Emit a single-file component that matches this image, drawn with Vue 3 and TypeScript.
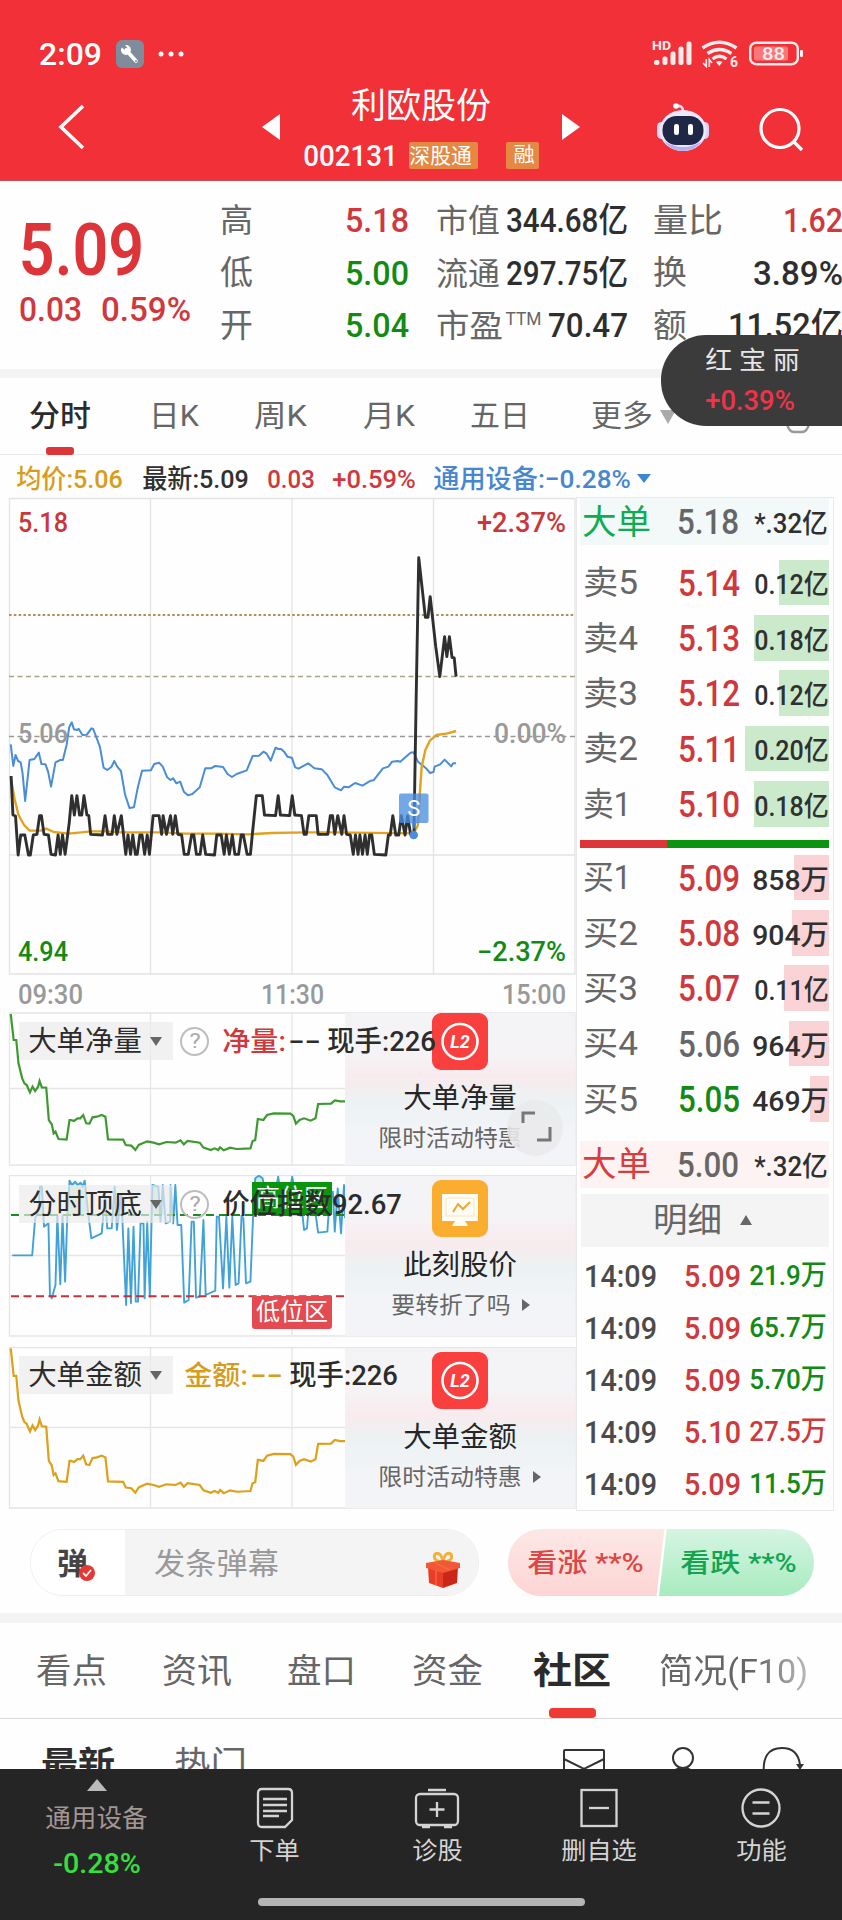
<script setup lang="ts">
import { h } from 'vue'

interface FitProps { t: string; w: number; s: number }

// Single line of text condensed or stretched to a fixed ink width.
const Fit = (p: FitProps) => {
  const bearing = p.s * 0.03
  return h('svg', { width: p.w, height: p.s, overflow: 'visible', style: { display: 'block', flex: 'none' } }, [
    h('text', {
      x: -bearing,
      y: p.s / 2 + p.s * 0.36,
      'font-size': p.s,
      fill: 'currentColor',
      textLength: p.w + bearing * 2,
      lengthAdjust: 'spacingAndGlyphs',
    }, p.t),
  ])
}
Fit.props = ['t', 'w', 's']

const quotes = [
  { a: '高', b: '5.18', bc: 'up', c: '市值', d: '344.68亿', dw: 120, e: '量比', ew: 68, f: '1.62', fw: 58, fc: 'up' },
  { a: '低', b: '5.00', bc: 'down', c: '流通', d: '297.75亿', dw: 120, e: '换', ew: 32, f: '3.89%', fw: 88, fc: '' },
  { a: '开', b: '5.04', bc: 'down', c: '市盈', d: '70.47', dw: 78, e: '额', ew: 32, f: '11.52亿', fw: 113, fc: '', ttm: true },
]

const periods = [
  { t: '分时', w: 60, gap: 30, on: true },
  { t: '日K', w: 48, gap: 60 },
  { t: '周K', w: 51, gap: 57 },
  { t: '月K', w: 50, gap: 58 },
  { t: '五日', w: 58, gap: 57 },
  { t: '更多', w: 60, gap: 63 },
]

const sells = [
  { n: '卖5', w: 53, p: '5.14', v: '0.12亿', bar: 50 },
  { n: '卖4', w: 53, p: '5.13', v: '0.18亿', bar: 75 },
  { n: '卖3', w: 53, p: '5.12', v: '0.12亿', bar: 50 },
  { n: '卖2', w: 53, p: '5.11', v: '0.20亿', bar: 84 },
  { n: '卖1', w: 46, p: '5.10', v: '0.18亿', bar: 75 },
]
const buys = [
  { n: '买1', w: 46, p: '5.09', c: 'up', v: '858万', bar: 35 },
  { n: '买2', w: 53, p: '5.08', c: 'up', v: '904万', bar: 37 },
  { n: '买3', w: 53, p: '5.07', c: 'up', v: '0.11亿', bar: 45 },
  { n: '买4', w: 53, p: '5.06', c: 'flat', v: '964万', bar: 40 },
  { n: '买5', w: 53, p: '5.05', c: 'down', v: '469万', bar: 19.5 },
]
const ticks = [
  { p: '5.09', v: '21.9万', c: 'down' },
  { p: '5.09', v: '65.7万', c: 'down' },
  { p: '5.09', v: '5.70万', c: 'down' },
  { p: '5.10', v: '27.5万', c: 'up' },
  { p: '5.09', v: '11.5万', c: 'down' },
]
const sections = [
  { t: '看点', w: 69, gap: 37 },
  { t: '资讯', w: 68, gap: 57 },
  { t: '盘口', w: 67, gap: 57 },
  { t: '资金', w: 69, gap: 58 },
  { t: '社区', w: 76, gap: 52, on: true },
  { t: '简况(F10)', w: 147, gap: 50, fade: true },
]

const priceLine = '30,228 35,345 42,348 49,465 56,405 67,405 77,465 82,465 90,405 100,403 107,347 112,347 119,403 131,405 138,463 150,465 157,405 163,463 169,405 176,463 187,370 194,287 201,345 208,287 215,345 221,345 227,287 235,345 240,347 245,403 277,405 284,347 291,403 303,403 309,347 316,403 328,347 340,463 346,405 353,463 359,405 366,463 371,463 378,405 384,405 391,463 398,405 404,463 414,347 430,347 437,403 441,347 450,403 461,347 467,403 474,347 481,403 491,405 498,463 509,463 518,405 524,405 531,463 541,463 548,405 556,463 580,465 586,405 598,405 606,463 612,405 620,463 628,405 635,463 645,463 652,405 658,405 668,463 677,463 682,405 693,287 709,287 715,345 745,347 752,287 758,345 783,347 790,287 797,345 815,347 822,403 828,403 835,347 855,347 860,403 886,403 893,347 899,347 905,403 913,347 924,403 930,347 937,403 947,405 955,463 961,405 968,463 973,405 980,463 987,405 993,463 999,405 1005,405 1012,463 1043,465 1050,405 1055,405 1062,347 1070,405 1078,405 1085,347 1095,405 1102,347 1110,403 1119,403 1125,0 1132,-427 1150,-248 1157,-248 1163,-310 1178,-160 1189,-70 1202,-190 1208,-130 1215,-190 1222,-128 1228,-126 1233,-70'
const avgLine = '30,240 40,300 50,345 65,375 80,392 110,392 125,386 145,396 185,401 220,397 245,394 285,394 330,397 440,397 500,401 590,401 670,403 735,399 830,397 900,397 1118,400 1130,375 1135,280 1140,200 1150,150 1162,122 1180,105 1210,100 1233,93'
const sectorLine = '29,133 36,198 42,165 49,183 56,187 61,220 68,303 80,180 93,177 105,158 112,192 123,193 130,215 138,260 150,187 163,180 170,180 180,135 187,82 194,67 200,88 208,90 213,87 223,105 235,104 247,85 252,87 270,140 280,203 290,210 301,201 309,183 317,200 327,213 338,283 350,324 362,322 372,265 384,212 408,211 417,192 430,188 440,200 452,232 461,240 468,235 477,250 487,245 497,275 508,286 520,282 540,262 555,205 570,205 582,198 603,201 615,222 627,231 640,222 667,211 683,168 700,167 712,155 720,160 732,182 745,143 752,147 760,147 768,155 777,170 789,173 798,202 807,206 833,190 850,205 870,208 885,225 905,262 922,271 930,260 942,262 960,249 980,257 1002,242 1010,241 1035,205 1050,200 1060,185 1075,183 1082,185 1110,158 1118,157 1130,185 1150,203 1163,219 1172,216 1175,200 1190,193 1202,179 1220,199 1225,190 1233,190'
const flowLine = '29,27 37,105 44,105 50,175 60,220 66,235 72,240 81,262 88,245 95,258 103,245 107,228 113,247 125,248 132,345 140,358 145,385 150,380 158,402 180,404 188,345 192,345 200,348 210,340 217,340 225,330 233,355 242,356 250,337 262,335 275,330 285,335 292,403 333,404 340,420 355,422 366,435 375,420 398,409 415,413 430,418 450,411 475,413 488,406 497,418 507,408 540,413 550,428 570,435 580,430 590,435 595,427 605,436 622,428 640,432 677,430 683,408 690,405 697,342 712,345 722,330 740,325 785,326 793,333 800,356 810,345 822,340 840,347 853,340 860,297 895,296 905,286 920,289 933,289'
const zoneLine = '33,751 87,751 95,640 103,620 108,545 113,545 119,665 131,655 135,870 140,880 150,840 155,632 163,838 169,632 176,830 182,632 188,527 195,540 203,530 210,540 218,533 223,545 229,527 240,640 247,700 275,685 284,570 290,670 302,670 310,545 316,675 328,570 333,700 341,900 347,670 354,895 361,665 367,890 373,890 380,655 388,655 391,880 398,650 405,875 412,540 428,545 434,650 440,540 448,655 460,650 461,540 468,655 474,540 480,660 490,660 498,893 510,885 518,650 524,650 530,878 540,875 550,645 556,870 582,857 586,635 592,635 603,850 612,635 620,848 628,635 637,840 645,835 653,632 658,640 665,835 677,830 684,640 690,520 700,512 710,520 715,550 745,560 752,515 758,560 783,560 790,515 797,560 815,600 822,675 830,670 835,600 850,600 860,683 885,680 890,600 900,560 905,680 913,550 922,685 930,540 933,640'
const sx = 580 / 1568
const sy = 1 / 3
</script>

<template>
  <div class="app">
    <header class="top">
      <div class="status">
        <Fit class="time" t="2:09" :w="61" :s="31" />
        <svg class="tool" width="28" height="28" viewBox="0 0 28 28">
          <rect width="28" height="28" rx="6" fill="#7f8c9b" />
          <path d="M10 10 L20 21" stroke="#fff" stroke-width="3.6" stroke-linecap="round" />
          <path d="M6 7.5 L9 10.5 L11.5 8 L9 5 A5 5 0 1 1 5 9 Z" fill="#fff" />
          <circle cx="20" cy="21" r="1" fill="#7f8c9b" />
        </svg>
        <svg class="dots" width="26" height="6" viewBox="0 0 26 6" fill="#fff"><circle cx="3" cy="3" r="2.5" /><circle cx="13" cy="3" r="2.5" /><circle cx="23" cy="3" r="2.5" /></svg>
        <svg class="signals" width="152" height="28" viewBox="0 0 152 28" fill="#fdecec">
          <text x="1" y="9.5" font-size="12.5" font-weight="700" textLength="19" lengthAdjust="spacingAndGlyphs">HD</text>
          <rect x="3" y="20" width="5.500" height="5" rx="2" /><rect x="11.500" y="16.500" width="5" height="8.500" rx="2" /><rect x="19.500" y="11.500" width="5" height="13.500" rx="2" /><rect x="27.500" y="6.500" width="5" height="18.500" rx="2" /><rect x="35.500" y="1.500" width="5" height="23.500" rx="2" />
          <g fill="none" stroke="#fdecec" stroke-width="3.400"><path d="M51.500 8 Q68.300 -3.500 85.500 8" /><path d="M56.500 13.500 Q68.300 5.500 80.500 13.500" /><path d="M61.500 19 Q68.300 13.500 75.500 19" /></g>
          <path d="M65 22 Q68.300 20 71.500 22 L68.300 26z" />
          <path d="M55.300 19 V26.500 L52 23 M58.300 27 V19.500 L61 23" fill="none" stroke="#fdecec" stroke-width="1.600" />
          <text x="79" y="26.500" font-size="14" font-weight="700">6</text>
          <rect x="99.200" y="2.700" width="47.600" height="21.500" rx="6" fill="none" stroke="#fdecec" stroke-width="2.400" />
          <rect x="103" y="6.500" width="34" height="14" rx="2" fill="#f9777b" />
          <text x="111" y="20" font-size="18" font-weight="500" textLength="23" lengthAdjust="spacingAndGlyphs">88</text>
          <rect x="149" y="10" width="3" height="7" rx="1" />
        </svg>
      </div>
      <div class="nav">
        <svg class="back" width="28" height="46" viewBox="0 0 28 46"><path d="M25 2 L3 23 L25 44" fill="none" stroke="#fff" stroke-width="3.600" /></svg>
        <svg class="prev" width="18" height="26" viewBox="0 0 18 26"><path d="M18 0 V26 L0 13z" fill="#fff" /></svg>
        <div class="name">
          <Fit t="利欧股份" :w="138" :s="35" />
          <div class="code">
            <Fit class="num" t="002131" :w="93" :s="29" />
            <span class="tag wide"><Fit t="深股通" :w="61" :s="21" /></span>
            <span class="tag slim"><Fit t="融" :w="20" :s="20" /></span>
          </div>
        </div>
        <svg class="next" width="18" height="26" viewBox="0 0 18 26"><path d="M0 0 V26 L18 13z" fill="#fff" /></svg>
        <svg class="robot" width="52" height="50" viewBox="0 0 52 50">
          <path d="M26 9 Q26 3 19 4" fill="none" stroke="#e6dcfa" stroke-width="2.600" /><circle cx="19" cy="4" r="2.800" fill="#fff" />
          <rect x="0" y="20" width="9" height="17" rx="4.500" fill="#d9d3fa" /><rect x="43" y="20" width="9" height="17" rx="4.500" fill="#d9d3fa" />
          <ellipse cx="26" cy="28.500" rx="23.500" ry="20.500" fill="#ece9fd" />
          <path d="M7 39 Q26 51 45 39 Q38 49 26 49 Q14 49 7 39" fill="#b9b0ef" />
          <rect x="5.500" y="14" width="41" height="29" rx="14" fill="#1f2747" />
          <rect x="17" y="22" width="5" height="11" rx="2.300" fill="#fff" /><rect x="31" y="22" width="5" height="11" rx="2.300" fill="#fff" />
        </svg>
        <svg class="search" width="46" height="46" viewBox="0 0 46 46" fill="none" stroke="#fff" stroke-width="3.200"><circle cx="21" cy="21.500" r="19" /><path d="M34.500 34.500 L43 43" /></svg>
      </div>
    </header>

    <section class="summary">
      <div class="last up">
        <Fit class="heavy" t="5.09" :w="121" :s="73" />
        <div class="change num"><Fit t="0.03" :w="61" :s="34" /><Fit t="0.59%" :w="88" :s="34" /></div>
      </div>
      <div class="quotes">
        <div v-for="q in quotes" :key="q.a" class="quote">
          <Fit class="muted" :t="q.a" :w="31" :s="33" />
          <Fit class="num" :class="q.bc" :t="q.b" :w="62" :s="34" />
          <div class="pair">
            <Fit class="muted" :t="q.c" :w="q.ttm ? 65 : 62" :s="32" />
            <Fit v-if="q.ttm" class="ttm muted" t="TTM" :w="35" :s="18" />
            <Fit class="num end" :t="q.d" :w="q.dw" :s="34" />
          </div>
          <div class="pair far">
            <Fit class="muted" :t="q.e" :w="q.ew" :s="33" />
            <Fit class="num end" :class="q.fc" :t="q.f" :w="q.fw" :s="34" />
          </div>
        </div>
      </div>
    </section>

    <nav class="periods">
      <div v-for="p in periods" :key="p.t" class="period" :class="{ on: p.on }" :style="{ marginLeft: p.gap + 'px' }">
        <Fit :t="p.t" :w="p.w" :s="30" />
      </div>
      <svg class="more" width="16" height="14" viewBox="0 0 16 14"><path d="M0 0 H16 L8 14z" fill="#aaa" /></svg>
      <svg class="gear" width="26" height="30" viewBox="0 0 26 30"><path d="M2 8 L13 2 L24 8 V20 Q22 28 17 28 H9 Q4 28 2 20z" fill="none" stroke="#999" stroke-width="2.500" /></svg>
    </nav>

    <div class="legend">
      <Fit class="gold" t="均价:5.06" :w="105" :s="26.500" />
      <Fit class="dark" t="最新:5.09" :w="105" :s="26.500" />
      <Fit class="up" t="0.03" :w="46" :s="26.500" />
      <Fit class="up" t="+0.59%" :w="82" :s="26.500" />
      <Fit class="blue" t="通用设备:−0.28%" :w="196" :s="26.500" />
      <svg width="14" height="9" viewBox="0 0 14 9"><path d="M0 0 H14 L7 9z" fill="#3f86d2" /></svg>
    </div>

    <main class="board">
      <div class="charts">
        <svg class="price" width="576" height="514" viewBox="0 497 576 514">
          <g stroke="#e3e3e3" stroke-width="1.300" fill="none">
            <path d="M9.500 498.500 H575 V974 H9.500z M150.500 498 V975 M292 498 V975 M433.500 498 V975 M9 855 H575" />
          </g>
          <path d="M9 615 H575" stroke="#b0905c" stroke-width="2" stroke-dasharray="2.600 2.200" />
          <path d="M9 676.600 H575" stroke="#aaa285" stroke-width="1.500" stroke-dasharray="5 3.500" />
          <path d="M9 736.500 H575" stroke="#999" stroke-width="1.500" stroke-dasharray="5 3.500" />
          <g :transform="`translate(0 700) scale(${sx} ${sy})`" fill="none" stroke-linejoin="round">
            <polyline :points="sectorLine" stroke="#4a8dd6" stroke-width="2" vector-effect="non-scaling-stroke" />
            <polyline :points="avgLine" stroke="#e2a21e" stroke-width="2.400" vector-effect="non-scaling-stroke" />
            <polyline :points="priceLine" stroke="#2f2f2f" stroke-width="2.900" vector-effect="non-scaling-stroke" />
          </g>
          <rect x="399" y="793.500" width="29.500" height="29.500" rx="2" fill="#4a90e2" opacity=".78" />
          <path d="M411 822 H417 L414 830z" fill="#4a90e2" opacity=".78" /><circle cx="413.700" cy="835" r="4.300" fill="#4a8de0" />
          <g font-size="27" font-weight="500">
            <text x="18" y="532" textLength="50" lengthAdjust="spacingAndGlyphs" fill="#cb363a">5.18</text>
            <text x="477" y="532" textLength="89" lengthAdjust="spacingAndGlyphs" fill="#cb363a">+2.37%</text>
            <text x="18" y="961" textLength="50" lengthAdjust="spacingAndGlyphs" fill="#128a14">4.94</text>
            <text x="477" y="961" textLength="89" lengthAdjust="spacingAndGlyphs" fill="#128a14">−2.37%</text>
            <g fill="#999">
              <text x="18" y="743" textLength="50" lengthAdjust="spacingAndGlyphs">5.06</text>
              <text x="494" y="743" textLength="72" lengthAdjust="spacingAndGlyphs">0.00%</text>
              <text x="18" y="1004" textLength="65" lengthAdjust="spacingAndGlyphs">09:30</text>
              <text x="261" y="1004" textLength="63" lengthAdjust="spacingAndGlyphs">11:30</text>
              <text x="502" y="1004" textLength="64" lengthAdjust="spacingAndGlyphs">15:00</text>
            </g>
          </g>
          <text x="413.700" y="816" font-size="22" fill="#fff" text-anchor="middle">S</text>
        </svg>

        <div class="panel first">
          <svg class="plot" width="576" height="154" viewBox="0 1012 576 154">
            <path d="M9.500 1013 H575 V1165 H9.500z M150.500 1013 V1166 M292 1013 V1166 M9 1088.500 H345" fill="none" stroke="#e5e5e5" stroke-width="1.300" />
            <g :transform="`translate(0 1005) scale(${sx} ${sy})`"><polyline :points="flowLine" fill="none" stroke="#3c9a30" stroke-width="2.200" vector-effect="non-scaling-stroke" /></g>
          </svg>
          <div class="ad"></div>
          <div class="caption">
            <div class="picker"><Fit t="大单净量" :w="112" :s="28" /><i class="caret"></i></div>
            <span class="help"><Fit t="?" :w="10" :s="20" /></span>
            <Fit class="up value" t="净量:" :w="62" :s="27" /><Fit class="dash" t="−−" :w="31" :s="27" /><Fit class="hand" t="现手:226" :w="107" :s="28" />
          </div>
          <div class="promo">
            <svg class="logo" width="56" height="57" viewBox="0 0 56 57"><rect width="56" height="57" rx="9" fill="#f9403f" /><circle cx="28" cy="28.500" r="17.500" fill="none" stroke="#fff" stroke-width="2.600" /><text x="28" y="35" font-size="18" font-style="italic" font-weight="700" fill="#fff" text-anchor="middle">L2</text></svg>
            <Fit class="headline" t="大单净量" :w="112" :s="28" />
            <div class="sub"><Fit t="限时活动特惠" :w="142" :s="23" /><i class="play"></i></div>
          </div>
          <svg class="expand" width="58" height="58" viewBox="0 0 58 58"><circle cx="29" cy="29" r="28" fill="#e9e9ec" opacity=".88" /><path d="M17 24 V14 H29 M31 41 H44 V28" fill="none" stroke="#777" stroke-width="3" /></svg>
        </div>

        <div class="panel second">
          <svg class="plot" width="576" height="162" viewBox="0 1175 576 162">
            <defs><clipPath id="high-zone"><rect x="0" y="400" width="933" height="230" /></clipPath></defs>
            <path d="M9.500 1175.700 H575 V1336 H9.500z M150.500 1175 V1336 M292 1175 V1336 M9 1255.500 H345" fill="none" stroke="#e5e5e5" stroke-width="1.300" />
            <g :transform="`translate(0 1005) scale(${sx} ${sy})`">
              <polygon :points="zoneLine + ' 933,2000 33,2000'" fill="#cfe8dc" clip-path="url(#high-zone)" />
              <polyline :points="zoneLine" fill="none" stroke="#41a2d8" stroke-width="1.900" stroke-linejoin="round" vector-effect="non-scaling-stroke" />
            </g>
            <path d="M11 1215 H345" stroke="#1c8c1c" stroke-width="1.800" stroke-dasharray="8 5" />
            <path d="M11 1296.300 H345" stroke="#c4323c" stroke-width="2" stroke-dasharray="8 4.500" />
            <path d="M252 1182 H332 V1215 H252z" fill="#0b940f" /><path d="M252 1296 H332 V1326 Q332 1329 329 1329 H255 Q252 1329 252 1326z" fill="#e44b50" />
            <g font-size="24" fill="#fff"><text x="256" y="1206" textLength="72">高位区</text><text x="256" y="1320" textLength="72">低位区</text></g>
          </svg>
          <div class="ad"></div>
          <div class="caption">
            <div class="picker"><Fit t="分时顶底" :w="112" :s="28" /><i class="caret"></i></div>
            <span class="help"><Fit t="?" :w="10" :s="20" /></span>
            <Fit class="value" t="价位指数92.67" :w="178" :s="28" />
          </div>
          <div class="promo">
            <svg class="logo" width="56" height="57" viewBox="0 0 56 57"><rect width="56" height="57" rx="9" fill="#faad2e" /><path d="M10 14 H46 V41 H33 L36 46 H20 L23 41 H10z" fill="#fffdf5" /><path d="M14 18 H42 V36 H14z" fill="none" stroke="#f7e5bd" stroke-width="1" /><path d="M21 32 L26 24 L31 29 L38 22" fill="none" stroke="#f2a52a" stroke-width="2" /></svg>
            <Fit class="headline" t="此刻股价" :w="112" :s="28" />
            <div class="sub"><Fit t="要转折了吗" :w="118" :s="23" /><i class="play"></i></div>
          </div>
        </div>

        <div class="panel third">
          <svg class="plot" width="576" height="162" viewBox="0 1347 576 162">
            <path d="M9.500 1347.500 H575 V1508 H9.500z M150.500 1347 V1508 M292 1347 V1508 M9 1427.500 H345" fill="none" stroke="#e5e5e5" stroke-width="1.300" />
            <g :transform="`translate(0 1338.800) scale(${sx} ${sy * 1.062})`"><polyline :points="flowLine" fill="none" stroke="#dda019" stroke-width="2.200" vector-effect="non-scaling-stroke" /></g>
          </svg>
          <div class="ad"></div>
          <div class="caption">
            <div class="picker"><Fit t="大单金额" :w="112" :s="28" /><i class="caret"></i></div>
            <Fit class="gold amount" t="金额:" :w="62" :s="27" /><Fit class="gold dash" t="−−" :w="31" :s="27" /><Fit class="hand" t="现手:226" :w="107" :s="28" />
          </div>
          <div class="promo">
            <svg class="logo" width="56" height="57" viewBox="0 0 56 57"><rect width="56" height="57" rx="9" fill="#f9403f" /><circle cx="28" cy="28.500" r="17.500" fill="none" stroke="#fff" stroke-width="2.600" /><text x="28" y="35" font-size="18" font-style="italic" font-weight="700" fill="#fff" text-anchor="middle">L2</text></svg>
            <Fit class="headline" t="大单金额" :w="112" :s="28" />
            <div class="sub"><Fit t="限时活动特惠" :w="142" :s="23" /><i class="play"></i></div>
          </div>
        </div>
      </div>

      <aside class="depth">
        <div class="big sell"><Fit class="tone" t="大单" :w="67" :s="34" /><Fit class="num flat" t="5.18" :w="60" :s="35" /><Fit class="dark" t="*.32亿" :w="72" :s="27" /></div>
        <div class="levels asks">
          <div v-for="r in sells" :key="r.n" class="level">
            <div><Fit class="muted" :t="r.n" :w="r.w" :s="33" /></div><Fit class="num up" :t="r.p" :w="60" :s="36" />
            <div class="vol"><i class="bar ask" :style="{ width: r.bar + 'px' }"></i><Fit class="dark" :t="r.v" :w="73" :s="27" /></div>
          </div>
        </div>
        <div class="ratio"><i></i></div>
        <div class="levels bids">
          <div v-for="r in buys" :key="r.n" class="level">
            <div><Fit class="muted" :t="r.n" :w="r.w" :s="33" /></div><Fit class="num" :class="r.c" :t="r.p" :w="60" :s="36" />
            <div class="vol"><i class="bar bid" :style="{ width: r.bar + 'px' }"></i><Fit class="dark" :t="r.v" :w="r.v.length > 4 ? 73 : 75" :s="28" /></div>
          </div>
        </div>
        <div class="big buy"><Fit class="tone" t="大单" :w="67" :s="34" /><Fit class="num flat" t="5.00" :w="60" :s="35" /><Fit class="dark" t="*.32亿" :w="72" :s="27" /></div>
        <div class="detail"><Fit t="明细" :w="67" :s="34" /><i class="rise"></i></div>
        <div class="ticks">
          <div v-for="(r, i) in ticks" :key="i" class="tick">
            <Fit class="clock" t="14:09" :w="71" :s="32" /><Fit class="up" :t="r.p" :w="55" :s="32" /><Fit :class="r.c" :t="r.v" :w="76" :s="28" />
          </div>
        </div>
      </aside>
    </main>

    <section class="talk">
      <div class="input">
        <div class="danmu">
          <Fit t="弹" :w="29" :s="30" />
          <svg class="check" width="16" height="16" viewBox="0 0 16 16"><circle cx="8" cy="8" r="8" fill="#e53935" /><path d="M4 8 L7 11 L12 5" fill="none" stroke="#fff" stroke-width="1.800" /></svg>
        </div>
        <div class="field">
          <Fit t="发条弹幕" :w="123" :s="30" />
          <svg class="gift" width="38" height="38" viewBox="0 0 38 38">
            <path d="M19 11 Q8 10 11 3 Q17 0 19 11 Q21 0 27 3 Q30 10 19 11" fill="none" stroke="#f3b13c" stroke-width="3" />
            <path d="M4 16 L19 20 V37 L5 32z" fill="#e93d27" /><path d="M34 16 L19 20 V37 L33 32z" fill="#c92717" />
            <path d="M2 12 L19 9 L36 12 V17 L19 22 L2 17z" fill="#f25738" /><path d="M12 19 V34 M11 12 L26 19" stroke="#ef6a3c" stroke-width="1.500" />
          </svg>
        </div>
      </div>
      <div class="vote rise-vote"><Fit t="看涨 **%" :w="115" :s="26" /></div>
      <div class="vote fall-vote"><Fit t="看跌 **%" :w="115" :s="26" /></div>
    </section>

    <nav class="sections">
      <div v-for="s in sections" :key="s.t" class="section" :class="{ on: s.on, fade: s.fade }" :style="{ marginLeft: s.gap + 'px' }">
        <Fit :t="s.t" :w="s.w" :s="s.on ? 37 : 34" />
      </div>
    </nav>

    <div class="feed">
      <Fit class="newest" t="最新" :w="72" :s="35" />
      <Fit class="hot" t="热门" :w="71" :s="33" />
      <svg class="mail" width="42" height="32" viewBox="0 0 42 32" fill="none" stroke="#333" stroke-width="2"><rect x="1" y="1" width="40" height="30" rx="1" /><path d="M1 10 L21 20 L41 10" /></svg>
      <svg class="person" width="36" height="40" viewBox="0 0 36 40" fill="none" stroke="#333" stroke-width="2"><circle cx="18" cy="11" r="10" /><path d="M8 24 Q18 18 28 24 L34 39 H2z" /></svg>
      <svg class="reload" width="44" height="42" viewBox="0 0 44 42"><path d="M2 30 Q-1 2 20 2 Q36 2 38 19" fill="none" stroke="#333" stroke-width="2" /><path d="M34 18 H42 L38 24z" fill="#333" /></svg>
    </div>

    <div class="float"><Fit t="红 宝 丽" :w="93" :s="25" /><Fit class="rate" t="+0.39%" :w="88" :s="28" /></div>

    <footer class="dock">
      <div class="items">
        <div class="index"><i class="tri"></i><Fit class="industry" t="通用设备" :w="101" :s="25" /><Fit class="drop" t="-0.28%" :w="86" :s="27" /></div>
        <div class="item">
          <svg width="38" height="42" viewBox="0 0 38 42"><path d="M6 2 H32 Q36 2 36 6 V33 L29 40 H6 Q2 40 2 36 V6 Q2 2 6 2z M7 12 H31 M7 18 H31 M7 24 H31 M7 29 H23" /></svg><Fit t="下单" :w="49" :s="24" />
        </div>
        <div class="item">
          <svg width="46" height="42" viewBox="0 0 46 42"><rect x="2" y="7" width="42" height="31" rx="4" /><path d="M14 3 H32 M8 40 H16 M30 40 H38 M23 15 V30 M15.500 22.500 H30.500" /></svg><Fit t="诊股" :w="49" :s="24" />
        </div>
        <div class="item">
          <svg width="40" height="42" viewBox="0 0 40 42"><rect x="2.500" y="3" width="35" height="36" /><path d="M10 21 H30" /></svg><Fit t="删自选" :w="74" :s="24" />
        </div>
        <div class="item">
          <svg width="42" height="42" viewBox="0 0 42 42"><circle cx="21" cy="21" r="18.500" /><path d="M12.500 15.500 H29.500 M12.500 26.500 H29.500" /></svg><Fit t="功能" :w="49" :s="24" />
        </div>
      </div>
      <div class="home"></div>
    </footer>
  </div>
</template>

<style>
body { background: #fefefe; }
</style>

<style scoped>
.app { position: relative; width: 842px; height: 1920px; overflow: hidden; background: #fefefe; color: #2e2e2e; font-family: Roboto, "Noto Sans CJK SC", sans-serif; }
.up { color: #cf383c; }
.down { color: #128a14; }
.flat, .muted { color: #666; }
.dark { color: #303030; }
.gold { color: #d89c1c; }
.blue { color: #4687d0; }
.num { font-weight: 500; }

.top { box-sizing: border-box; height: 181px; background: #f23037; color: #fff; border-bottom: 1px solid #c84c50; }
.status { display: flex; align-items: center; padding: 37px 39px 0 40px; height: 34px; }
.time { margin-bottom: 2px; font-weight: 500; }
.tool { margin-left: 15px; }
.dots { margin-left: 14px; }
.signals { margin-left: auto; }
.nav { display: flex; align-items: center; height: 90px; padding: 11px 0 0 58px; }
.prev { margin-left: 176px; }
.name { display: flex; flex-direction: column; align-items: center; gap: 18px; width: 236px; margin: 3px 23px 0; }
.code { display: flex; align-items: center; height: 28px; }
.tag { display: flex; align-items: center; box-sizing: border-box; height: 27px; background: #e58843; border-radius: 2px; }
.wide { width: 69px; margin-left: 12px; padding-left: 1px; }
.slim { width: 33px; margin-left: 28px; padding-left: 8px; }
.robot { margin-left: 77px; }
.search { margin: 6px 0 0 50px; }

.summary { display: flex; height: 188px; }
.last { width: 221px; padding: 31px 0 0 21px; box-sizing: border-box; }
.heavy { font-weight: 600; color: #dc3438; }
.change { display: flex; gap: 21px; margin-top: 7px; margin-left: -1px; }
.quotes { display: grid; grid-auto-rows: 52.5px; align-content: start; padding-top: 13px; }
.quote { display: grid; grid-template-columns: 125px 91px 190px 215px; align-items: center; }
.pair { display: flex; align-items: center; }
.far { margin-left: 27px; }
.end { margin-left: auto; }
.ttm { margin: 0 0 12px 4px; }

.periods { box-sizing: border-box; display: flex; height: 86px; border-top: 9px solid #f4f4f5; border-bottom: 1px solid #e8e8e8; color: #666; }
.period { display: flex; flex-direction: column; align-items: center; padding-top: 22px; }
.on { color: #2b2b2b; font-weight: 500; }
.period.on::after { content: ""; width: 28px; height: 8px; margin-top: 17px; margin-bottom: -1px; border-radius: 3px; background: #dc3639; }
.more { margin: 32px 0 0 8px; }
.gear { margin: 26px 0 0 109px; }

.legend { display: flex; box-sizing: border-box; align-items: center; height: 42px; padding: 5px 0 0 17px; font-weight: 500; }
.legend > :nth-child(2) { margin-left: 21px; }
.legend > :nth-child(3) { margin-left: 20px; }
.legend > :nth-child(4) { margin-left: 19px; }
.legend > :nth-child(5) { margin-left: 19px; }
.legend > :nth-child(6) { margin-left: 7px; }

.board { display: flex; height: 1014px; }
.charts { width: 576px; }
.price { display: block; }
.panel { position: relative; display: flex; }
.first { height: 154px; margin-top: 1px; }
.second { height: 162px; margin-top: 9px; }
.third { height: 162px; margin-top: 10px; }
.plot { position: absolute; left: 0; top: 0; }
.ad { position: absolute; left: 345px; top: 1px; width: 230px; bottom: 1px; background: linear-gradient(180deg, #f3f3f6 0%, #f5f3f6 25%, #f8ebee 42%, #ecf2f3 58%, #f3f4f7 80%, #f4f4f7 100%); }
.caption { position: relative; z-index: 1; display: flex; align-items: center; height: 38px; margin: 10px 0 0 19px; width: 418px; flex: none; color: #2c2c2c; font-weight: 500; }
.third .caption { margin-top: 9px; }
.picker { display: flex; flex: none; align-items: center; box-sizing: border-box; width: 154px; height: 38px; padding-left: 10px; background: rgba(235, 235, 235, .68); font-weight: 400; }
.caret { margin-left: 9px; border: 6.500px solid transparent; border-top: 9px solid #666; border-bottom: 0; }
.help { box-sizing: border-box; display: flex; flex: none; align-items: center; justify-content: center; width: 29px; height: 29px; margin-left: 7px; border: 2px solid #bdbdbd; border-radius: 50%; color: #aaa; font-weight: 400; }
.value { margin-left: 14px; }
.amount { margin-left: 12px; }
.dash { margin-left: 4px; }
.hand { margin-left: 8px; }
.promo { position: relative; display: flex; flex-direction: column; align-items: center; width: 170px; margin-left: -62px; padding-top: 1px; }
.second .promo, .third .promo { padding-top: 5px; }
.headline { margin-top: 14px; color: #252525; }
.sub { display: flex; align-self: flex-start; align-items: center; margin: 14px 0 0 4px; color: #666; }
.first .sub .play { visibility: hidden; }
.second .sub { margin-left: 17px; }
.play { margin-left: 12px; border: 6.500px solid transparent; border-left: 8px solid #666; border-right: 0; }
.expand { position: absolute; left: 506px; top: 87px; }

.depth { box-sizing: border-box; width: 258px; height: 1014px; padding: 0 4px; border: 1px solid #e9e9ec; }
.big { display: grid; grid-template-columns: 95px 77px 72px; align-items: center; height: 47px; margin-left: -1px; padding-left: 3px; }
.big > .dark { font-weight: 500; margin-top: 4px; }
.sell { background: #f3f9f8; }
.sell .tone { color: #0eac53; }
.buy { margin-top: 14px; background: #fdf3f3; }
.buy .tone { color: #dc3b3b; }
.levels { display: grid; grid-auto-rows: 55.400px; }
.asks { padding-top: 10px; }
.level { display: grid; grid-template-columns: 98px 60px 90px; align-items: center; }
.level > div:first-child { padding-left: 3px; }
.vol { position: relative; display: flex; align-items: center; justify-content: flex-end; height: 46px; padding-right: 1px; font-weight: 500; }
.vol > svg { position: relative; margin-top: 4px; }
.bar { position: absolute; right: 0; top: 0; height: 45.500px; }
.ask { background: #cbe9cb; }
.bid { background: #f9d3d6; }
.ratio { height: 8px; margin: 8px 0 2px -1px; background: #0b940f; }
.ratio i { display: block; width: 87px; height: 8px; background: #dc3639; }
.detail { display: flex; align-items: center; height: 53px; margin: 6px 0 0; padding-left: 73px; background: #f4f4f5; color: #666; }
.rise { margin-left: 19px; border: 6.500px solid transparent; border-bottom: 10px solid #666; border-top: 0; }
.ticks { display: grid; grid-auto-rows: 52px; padding-top: 2px; font-weight: 500; }
.tick { display: grid; grid-template-columns: 100px 65px 76px; align-items: center; padding-left: 4px; }
.clock { color: #4b4b4b; }

.talk { display: flex; height: 67px; padding: 18px 0 17px 30px; }
.input { box-sizing: border-box; display: flex; width: 449px; border: 1px solid #eee; border-radius: 33px; overflow: hidden; }
.danmu { display: flex; align-items: center; width: 94px; box-sizing: border-box; padding-left: 27px; font-weight: 700; color: #444; background: #fff; }
.check { margin: 20px 0 0 -8px; }
.field { display: flex; flex: 1; align-items: center; padding: 0 16px 0 30px; background: #f4f4f4; color: #999; }
.gift { margin: 14px 0 0 auto; }
.vote { display: flex; align-items: center; height: 67px; box-sizing: border-box; font-weight: 500; }
.rise-vote { width: 158px; margin-left: 29px; padding-left: 20px; border-radius: 33px 0 0 33px; color: #dc4643; background: linear-gradient(#fce8e7, #fcd5d3); clip-path: polygon(0 0, 99% 0, 94% 100%, 0 100%); }
.fall-vote { width: 155px; margin-left: -7px; padding-left: 22px; border-radius: 0 33px 33px 0; color: #13a451; background: linear-gradient(#d6f5e2, #a8ebc0); clip-path: polygon(5% 0, 100% 0, 100% 100%, 0 100%); }

.sections { box-sizing: border-box; display: flex; height: 106px; border-top: 10px solid #f4f4f5; border-bottom: 1px solid #d8d8d8; color: #666; }
.section { display: flex; flex-direction: column; align-items: center; padding-top: 31px; }
.section.on { padding-top: 29px; font-weight: 700; }
.section.on::after { content: ""; width: 47px; height: 10px; margin-top: 19px; border-radius: 4px; background: #f03a34; }
.fade { -webkit-mask-image: linear-gradient(90deg, #000 65%, rgba(0, 0, 0, .45)); mask-image: linear-gradient(90deg, #000 65%, rgba(0, 0, 0, .45)); }
.feed { display: flex; align-items: flex-start; padding: 28px 0 0 42px; }
.newest { font-weight: 700; }
.hot { margin-left: 61px; color: #666; }
.mail { margin: 2px 0 0 317px; }
.person { margin-left: 60px; }
.reload { margin: -1px 0 0 61px; }

.float { position: absolute; right: 0; top: 335px; box-sizing: border-box; width: 181px; height: 91px; padding: 12px 0 0 45px; border-radius: 45px 0 0 45px; background: #3b3b3b; color: #e6e6e6; }
.rate { margin-top: 14px; color: #ee3448; font-weight: 500; }

.dock { position: absolute; left: 0; bottom: 0; width: 842px; height: 151px; background: #252525; color: #d4d4d4; }
.items { display: grid; grid-template-columns: 193px 163px 162px 162px 1fr; height: 129px; }
.index { display: flex; flex-direction: column; align-items: center; padding-top: 10px; }
.tri { border: 10px solid transparent; border-bottom: 12px solid #bbb; border-top: 0; }
.industry { margin-top: 14px; color: #a49693; }
.drop { margin-top: 20px; color: #35e03c; font-weight: 500; }
.item { display: flex; flex-direction: column; align-items: center; padding-top: 18px; gap: 9px; }
.item > svg:first-child { fill: none; stroke: #d4d4d4; stroke-width: 2.300; }
.home { width: 327px; height: 8px; margin-left: 258px; border-radius: 4px; background: #b5b5b5; }
</style>
